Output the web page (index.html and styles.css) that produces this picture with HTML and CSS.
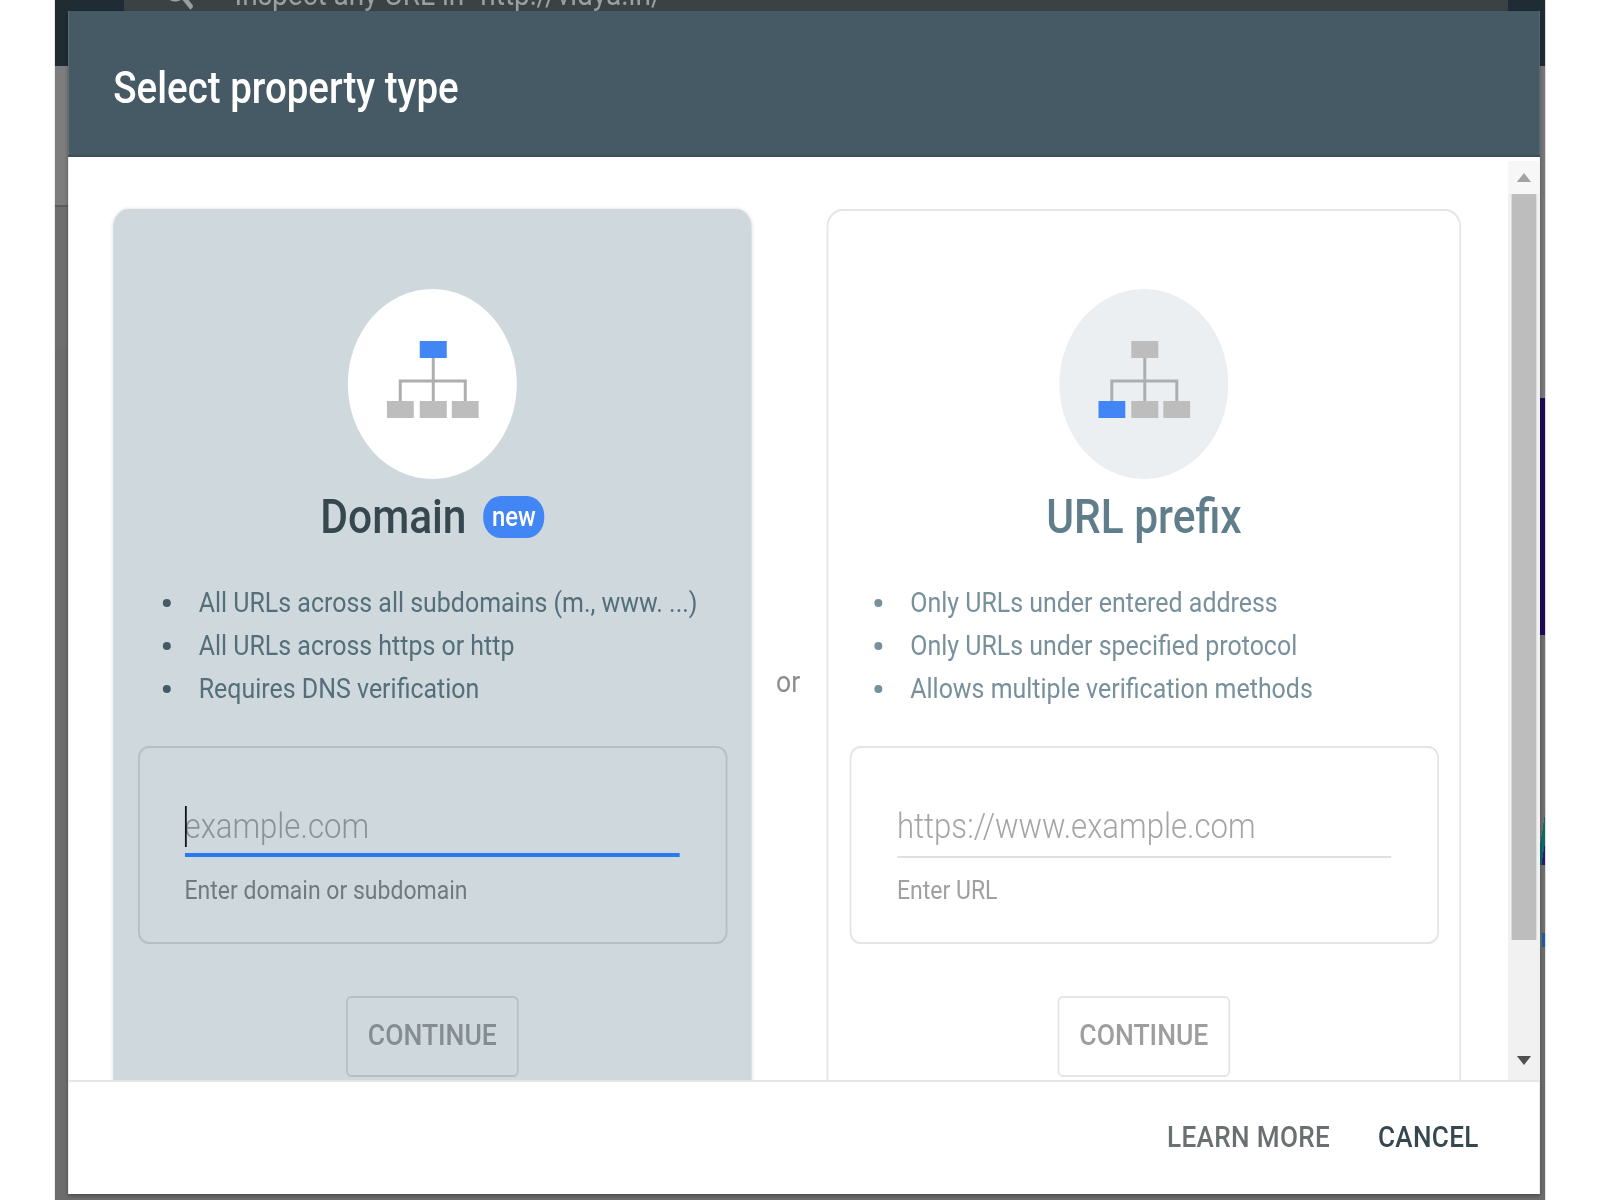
FILE: index.html
```html
<!DOCTYPE html>
<html lang="en">

<head>
    <meta charset="UTF-8">
    <title>Select property type</title>
    <link rel="stylesheet" href="styles.css">
</head>

<body>
    <div class="stage">
        <div class="backdrop">
            <div class="topbar">
                <div class="search">
                    <svg class="search-icon" viewBox="0 0 34 40" fill="none" stroke="#9aa0a0" stroke-width="5">
                        <circle cx="14" cy="14" r="11"></circle>
                        <path d="M22 22 L33 34"></path>
                    </svg>
                    <span>Inspect any URL in "http://vidya.in/"</span>
                </div>
            </div>
            <div class="behind">
                <div class="side side-left">
                    <div class="seg seg-light"></div>
                    <div class="seg seg-dark"></div>
                </div>
                <div class="side side-right">
                    <div class="seg seg-grey-a"></div>
                    <div class="seg seg-navy"></div>
                    <div class="seg seg-grey-b"></div>
                    <div class="seg seg-teal"></div>
                    <div class="seg seg-grey-b seg-short"></div>
                    <div class="seg seg-blue"></div>
                </div>
            </div>

            <div class="dialog">
                <div class="dialog-head">Select property type</div>

                <div class="dialog-body">
                    <div class="options">
                        <div class="card card-active">
                            <div class="circle">
                                <svg class="tree" viewBox="0 0 92 77" preserveAspectRatio="none">
                                    <path class="tree-line" d="M46.5 17V60M13.5 60V40H78.5V60"></path>
                                    <rect class="tree-on" x="33" y="0" width="27" height="17"></rect>
                                    <rect class="tree-off" x="0" y="60" width="27" height="17"></rect>
                                    <rect class="tree-off" x="33" y="60" width="27" height="17"></rect>
                                    <rect class="tree-off" x="65" y="60" width="27" height="17"></rect>
                                </svg>
                            </div>
                            <div class="card-title">Domain <span class="badge">new</span></div>
                            <ul class="points">
                                <li>All URLs across all subdomains (m., www. ...)</li>
                                <li>All URLs across https or http</li>
                                <li>Requires DNS verification</li>
                            </ul>
                            <div class="field-box">
                                <div class="field field-focus">
                                    <span class="caret"></span>
                                    <input type="text" placeholder="example.com">
                                </div>
                                <div class="hint">Enter domain or subdomain</div>
                            </div>
                            <button class="continue">CONTINUE</button>
                        </div>

                        <div class="or">or</div>

                        <div class="card">
                            <div class="circle">
                                <svg class="tree" viewBox="0 0 92 77" preserveAspectRatio="none">
                                    <path class="tree-line" d="M46.5 17V60M13.5 60V40H78.5V60"></path>
                                    <rect class="tree-off" x="33" y="0" width="27" height="17"></rect>
                                    <rect class="tree-on" x="0" y="60" width="27" height="17"></rect>
                                    <rect class="tree-off" x="33" y="60" width="27" height="17"></rect>
                                    <rect class="tree-off" x="65" y="60" width="27" height="17"></rect>
                                </svg>
                            </div>
                            <div class="card-title">URL prefix</div>
                            <ul class="points">
                                <li>Only URLs under entered address</li>
                                <li>Only URLs under specified protocol</li>
                                <li>Allows multiple verification methods</li>
                            </ul>
                            <div class="field-box">
                                <div class="field">
                                    <input type="text" placeholder="https://www.example.com">
                                </div>
                                <div class="hint">Enter URL</div>
                            </div>
                            <button class="continue">CONTINUE</button>
                        </div>
                    </div>

                    <div class="scrollbar">
                        <div class="arrow-box"><span class="arrow-up"></span></div>
                        <div class="thumb"></div>
                        <div class="arrow-box arrow-box-end"><span class="arrow-down"></span></div>
                    </div>
                </div>

                <div class="dialog-foot">
                    <button class="link">LEARN MORE</button>
                    <button class="link link-dark">CANCEL</button>
                </div>
            </div>
        </div>
    </div>
</body>

</html>
```

FILE: styles.css
```css
/* the whole screenshot is squeezed sideways, so everything below is in stretched px */
html,
body {
    margin: 0;
    overflow: hidden;
    background-color: #fff;
}

.stage {
    width: 1808px;
    height: 1200px;
    transform: scaleX(0.885);
    transform-origin: 0 0;
    font-family: Roboto, "Liberation Sans", sans-serif;
    filter: blur(0.7px);
}

/* page behind the modal */
.backdrop {
    position: relative;
    display: flex;
    flex-direction: column;
    width: 1684px;
    height: 1200px;
    margin-left: 62px;
    background-color: #6c6c6c;
    overflow: hidden;
}

.topbar {
    height: 66px;
    padding-left: 78px;
    padding-right: 42px;
    background-color: #1f2c33;
}

.search {
    display: flex;
    gap: 47px;
    height: 66px;
    padding-left: 44px;
    background-color: #3a4244;
    color: #9aa0a0;
    font-size: 31.7px;
    line-height: 36px;
    white-space: nowrap;
    overflow: hidden;
}

.search-icon {
    flex: none;
    width: 34px;
    height: 40px;
    margin-top: -26px;
}

.search span {
    margin-top: -23px;
}

.behind {
    flex: 1;
    display: flex;
    justify-content: space-between;
}

.side {
    display: flex;
    flex-direction: column;
}

.side-left {
    width: 15px;
}

.side-right {
    width: 6px;
}

.seg-light {
    height: 139px;
    background-color: #7d7d7d;
}

.seg-dark {
    height: 141px;
    background-color: #6e6e6e;
    border-top: 2px solid #5c5c5c;
}

.seg-grey-a {
    height: 332px;
    background-color: #777;
}

.seg-navy {
    height: 237px;
    background-color: #1e0b57;
}

.seg-grey-b {
    height: 168px;
    background-color: #6f6f6f;
}

/* thin diagonal bits of whatever is behind, only a sliver shows */
.seg-teal {
    height: 62px;
    background: linear-gradient(100deg, #6f6f6f 45%, #0f6a63 45%, #0f6a63 75%, #2a1a75 75%);
}

.seg-short {
    height: 68px;
}

.seg-blue {
    height: 14px;
    background: linear-gradient(90deg, #6f6f6f 40%, #1d5d9c 40%);
}

/* modal */
.dialog {
    position: absolute;
    left: 15px;
    top: 11px;
    display: flex;
    flex-direction: column;
    width: 1663px;
    height: 1183px;
    background-color: #fff;
    box-shadow: 0 2px 4px rgba(0, 0, 0, 0.3);
}

.dialog-head {
    flex: none;
    box-sizing: border-box;
    height: 146px;
    padding: 50px 0 0 51px;
    background-color: #455a64;
    border-bottom: 2px solid #3c505a;
    color: #fff;
    font-size: 43.5px;
    font-weight: 500;
    line-height: 56px;
}

.dialog-body {
    flex: 1;
    display: flex;
    min-height: 0;
    overflow: hidden;
}

.options {
    flex: 1;
    display: flex;
    align-items: flex-start;
    padding: 52px 0 0 51px;
}

.card {
    flex: none;
    display: flex;
    flex-direction: column;
    align-items: center;
    box-sizing: border-box;
    width: 717px;
    height: 946px;
    padding-top: 78px;
    background-color: #fff;
    border: 2px solid #e3e5e6;
    border-radius: 18px;
    color: #78909c;
}

.card-active {
    width: 721px;
    background-color: #cfd8dc;
    border-color: #cfd8dc;
    box-shadow: 0 0 4px rgba(0, 0, 0, 0.15);
    color: #546e7a;
}

.or {
    flex: none;
    width: 85px;
    margin-top: 453px;
    padding-right: 2px;
    box-sizing: border-box;
    color: #8d8d8d;
    font-size: 30px;
    line-height: 40px;
    text-align: center;
}

.circle {
    flex: none;
    display: flex;
    align-items: center;
    justify-content: center;
    width: 191px;
    height: 190px;
    border-radius: 50%;
    background-color: #eceff1;
}

.card-active .circle {
    background-color: #fff;
}

.tree {
    width: 104px;
    height: 77px;
    margin-top: -9px;
}

.tree-line {
    fill: none;
    stroke: #aeaeae;
    stroke-width: 3;
}

.tree-on {
    fill: #4285f4;
}

.tree-off {
    fill: #bdbdbd;
}

.card-title {
    display: flex;
    align-items: center;
    height: 72px;
    margin-top: 1px;
    margin-bottom: 29px;
    color: #607d8b;
    font-size: 48px;
    font-weight: 500;
    white-space: pre;
}

.card-active .card-title {
    color: #37474f;
}

.badge {
    display: flex;
    align-items: center;
    justify-content: center;
    width: 69px;
    height: 42px;
    margin-top: 2px;
    margin-left: 7px;
    border-radius: 20px;
    background-color: #4285f4;
    color: #fff;
    font-size: 27px;
    font-weight: 500;
}

.points {
    box-sizing: border-box;
    width: 666px;
    margin: 0;
    padding: 0 0 0 28px;
    list-style: none;
    font-size: 28.2px;
    line-height: 43px;
}

.points li {
    display: flex;
    align-items: center;
}

.points li::before {
    content: "";
    flex: none;
    width: 9px;
    height: 8px;
    margin-right: 32px;
    border-radius: 50%;
    background-color: #78909c;
}

.card-active .points li::before {
    background-color: #455a64;
}

.field-box {
    flex: none;
    box-sizing: border-box;
    width: 666px;
    height: 198px;
    margin-top: 36px;
    padding: 50px 52px 0;
    border: 2px solid #e3e5e6;
    border-radius: 12px;
}

.card-active .field-box {
    border-color: #b6c0c4;
}

.field {
    position: relative;
    height: 58px;
    border-bottom: 2px solid #e0e0e0;
}

.field input {
    display: block;
    box-sizing: border-box;
    width: 100%;
    height: 56px;
    padding: 0;
    border: 0;
    outline: 0;
    background: transparent;
    font-family: Roboto, sans-serif;
    font-size: 35.2px;
    font-weight: 300;
    color: #9e9e9e;
}

.field input::placeholder {
    color: #a5a5a5;
    opacity: 1;
}

.field-focus {
    border-bottom: 4px solid #2979ef;
    height: 55px;
    margin-bottom: 15px;
    margin-left: -1px;
}

.field-focus + .hint {
    margin-left: -1px;
}

.field-focus input::placeholder {
    color: #8b9296;
}

.caret {
    position: absolute;
    left: 0;
    top: 8px;
    width: 2px;
    height: 41px;
    background-color: #111;
}

.hint {
    margin-top: 14px;
    color: #a0a0a0;
    font-size: 26px;
    line-height: 36px;
}

.card-active .hint {
    color: #727a7e;
}

.continue {
    flex: none;
    box-sizing: border-box;
    width: 195px;
    height: 81px;
    margin-top: 52px;
    padding: 0 0 4px;
    background: transparent;
    border: 2px solid #e3e5e6;
    border-radius: 6px;
    color: #9e9e9e;
    font-family: Roboto, sans-serif;
    font-size: 30px;
    font-weight: 500;
}

.card-active .continue {
    border-color: #b6c0c4;
    color: #858d91;
}

/* scrollbar */
.scrollbar {
    flex: none;
    display: flex;
    flex-direction: column;
    align-items: center;
    width: 36px;
    margin-top: 4px;
    background-color: #f1f1f1;
}

.arrow-box {
    flex: none;
    display: flex;
    align-items: center;
    justify-content: center;
    width: 100%;
    height: 33px;
    background-color: #f7f7f7;
}

.arrow-box-end {
    margin-top: auto;
    height: 40px;
    background-color: transparent;
}

.arrow-up {
    border-left: 8px solid transparent;
    border-right: 8px solid transparent;
    border-bottom: 9px solid #a3a3a3;
}

.arrow-down {
    border-left: 8px solid transparent;
    border-right: 8px solid transparent;
    border-top: 9px solid #505050;
}

.thumb {
    flex: none;
    width: 28px;
    height: 746px;
    background-color: #bdbdbd;
}

/* footer */
.dialog-foot {
    flex: none;
    display: flex;
    align-items: center;
    justify-content: flex-end;
    gap: 54px;
    box-sizing: border-box;
    height: 114px;
    padding: 0 69px 2px 0;
    border-top: 2px solid #e6e6e6;
}

.link {
    padding: 0;
    background: transparent;
    border: 0;
    color: #6a6f72;
    font-family: Roboto, sans-serif;
    font-size: 29.5px;
    font-weight: 500;
    letter-spacing: 0.4px;
}

.link-dark {
    color: #37474f;
}
```
